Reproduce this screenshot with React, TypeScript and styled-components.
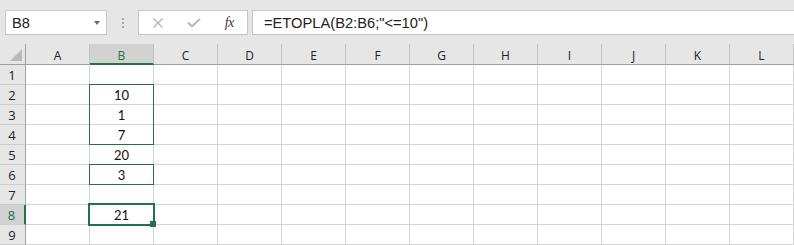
import React from 'react';
import styled, { createGlobalStyle, css } from 'styled-components';

const GREEN = '#217346';
const COLS = ['A', 'B', 'C', 'D', 'E', 'F', 'G', 'H', 'I', 'J', 'K', 'L'];
const ROWS = [1, 2, 3, 4, 5, 6, 7, 8, 9];
const ACTIVE_COL = 'B';
const ACTIVE_ROW = 8;

const values: Record<string, string> = {
  B2: '10',
  B3: '1',
  B4: '7',
  B5: '20',
  B6: '3',
  B8: '21',
};

const GlobalStyle = createGlobalStyle`
  html, body {
    margin: 0;
    padding: 0;
    background: #e6e6e6;
    overflow: hidden;
  }
  * { box-sizing: border-box; }
`;

const Page = styled.div`
  width: 794px;
  height: 245px;
  display: flex;
  flex-direction: column;
  background: #e6e6e6;
  font-family: 'Liberation Sans', Arial, sans-serif;
`;

/* formula bar */
const Toolbar = styled.div`
  height: 44px;
  display: flex;
  align-items: flex-start;
  padding: 10px 0 0 5px;
`;

const NameBox = styled.div`
  position: relative;
  width: 102px;
  height: 25px;
  background: #fff;
  border: 1px solid #c6c6c6;
  display: flex;
  align-items: center;
  padding-left: 6px;
  font-size: 14.5px;
  color: #222;
`;

const DropArrow = styled.span`
  margin-left: auto;
  margin-right: 6px;
  width: 0;
  height: 0;
  border-left: 3.5px solid transparent;
  border-right: 3.5px solid transparent;
  border-top: 4px solid #6d6d6d;
`;

const Grip = styled.div`
  width: 31px;
  height: 25px;
  display: flex;
  flex-direction: column;
  align-items: center;
  justify-content: center;
  gap: 2px;
`;

const GripDot = styled.span`
  width: 2px;
  height: 2px;
  background: #a8a8a8;
`;

const FormulaButtons = styled.div`
  width: 110px;
  height: 25px;
  background: #fff;
  border: 1px solid #c6c6c6;
  display: flex;
  padding-left: 1px;
`;

const IconSlot = styled.div`
  width: 36px;
  height: 100%;
  display: flex;
  align-items: center;
  justify-content: center;
`;

const FxLabel = styled.span`
  font-family: 'Liberation Serif', 'Times New Roman', serif;
  font-style: italic;
  font-size: 14px;
  color: #3c3c3c;
  letter-spacing: -0.5px;
`;

const FormulaInput = styled.div`
  flex: 1;
  height: 25px;
  margin-left: 4px;
  margin-right: -1px;
  background: #fff;
  border: 1px solid #c6c6c6;
  display: flex;
  align-items: center;
  padding-left: 11px;
  font-size: 14.7px;
  color: #222;
  white-space: nowrap;
`;

/* sheet */
const Sheet = styled.div`
  position: relative;
  display: grid;
  grid-template-columns: 26px repeat(12, 64px);
  grid-template-rows: 21px repeat(9, 20px);
  background: #fff;
`;

const Corner = styled.div`
  position: relative;
  background: #e6e6e6;
  border-right: 1px solid #a0a0a0;
  border-bottom: 1px solid #a0a0a0;
  &::after {
    content: '';
    position: absolute;
    left: 10px;
    top: 5px;
    width: 12px;
    height: 12px;
    background: #b9b9b9;
    clip-path: polygon(100% 0, 100% 100%, 0 100%);
  }
`;

const ColHeader = styled.div<{ $active?: boolean }>`
  background: ${({ $active }) => ($active ? '#d2d2d2' : '#e6e6e6')};
  border-right: 1px solid #c3c3c3;
  border-bottom: ${({ $active }) => ($active ? `2px solid ${GREEN}` : '1px solid #a0a0a0')};
  display: flex;
  align-items: center;
  justify-content: center;
  padding-top: ${({ $active }) => ($active ? '3px' : '2px')};
  font-family: 'Open Sans', sans-serif;
  font-size: 12px;
  color: ${({ $active }) => ($active ? GREEN : '#222')};
`;

const RowHeader = styled.div<{ $active?: boolean }>`
  background: ${({ $active }) => ($active ? '#d2d2d2' : '#e6e6e6')};
  border-bottom: 1px solid #cdcdcd;
  ${({ $active }) =>
    $active
      ? css`
          border-right: 2px solid ${GREEN};
          color: ${GREEN};
        `
      : css`
          border-right: 1px solid #a0a0a0;
          color: #222;
        `}
  display: flex;
  align-items: center;
  justify-content: center;
  padding-top: 1px;
  padding-right: 1px;
  font-family: 'Open Sans', sans-serif;
  font-size: 13px;
`;

const Cell = styled.div`
  border-right: 1px solid #d4d4d4;
  border-bottom: 1px solid #d4d4d4;
  display: flex;
  align-items: center;
  justify-content: center;
  padding-top: 1px;
  font-family: Lato, 'Open Sans', sans-serif;
  font-size: 13px;
  color: #111;
`;

const RangeBox = styled.div<{ $thick?: boolean }>`
  position: absolute;
  pointer-events: none;
  border: ${({ $thick }) => ($thick ? 2 : 1)}px solid ${GREEN};
`;

const FillHandle = styled.div`
  position: absolute;
  width: 6px;
  height: 6px;
  background: ${GREEN};
`;

const colLeft = (col: string) => 25 + 64 * COLS.indexOf(col);
const rowTop = (row: number) => 20 * row;

function Range({ col, from, to, thick }: { col: string; from: number; to: number; thick?: boolean }) {
  const pad = thick ? 1 : 0;
  const left = colLeft(col) - pad;
  const top = rowTop(from) - pad;
  return (
    <RangeBox
      $thick={thick}
      style={{
        left,
        top,
        width: 65 + pad * 2,
        height: (to - from + 1) * 20 + 1 + pad * 2,
      }}
    />
  );
}

const CrossIcon = () => (
  <svg width="12" height="10" viewBox="0 0 12 10">
    <path d="M1.5 0.5 L10.5 9.5 M10.5 0.5 L1.5 9.5" stroke="#b3b3b3" strokeWidth="1.3" fill="none" />
  </svg>
);

const CheckIcon = () => (
  <svg width="14" height="10" viewBox="0 0 14 10">
    <path d="M1 4.5 L5 8.5 L13 0.8" stroke="#b3b3b3" strokeWidth="1.8" fill="none" />
  </svg>
);

export default function App() {
  const handleLeft = colLeft(ACTIVE_COL) + 61;
  const handleTop = rowTop(ACTIVE_ROW) + 17;

  return (
    <>
      <GlobalStyle />
      <Page>
        <Toolbar>
          <NameBox>
            B8
            <DropArrow />
          </NameBox>
          <Grip>
            <GripDot />
            <GripDot />
            <GripDot />
          </Grip>
          <FormulaButtons>
            <IconSlot>
              <CrossIcon />
            </IconSlot>
            <IconSlot>
              <CheckIcon />
            </IconSlot>
            <IconSlot>
              <FxLabel>fx</FxLabel>
            </IconSlot>
          </FormulaButtons>
          <FormulaInput>=ETOPLA(B2:B6;"&lt;=10")</FormulaInput>
        </Toolbar>

        <Sheet>
          <Corner />
          {COLS.map((c) => (
            <ColHeader key={c} $active={c === ACTIVE_COL}>
              {c}
            </ColHeader>
          ))}
          {ROWS.map((r) => (
            <React.Fragment key={r}>
              <RowHeader $active={r === ACTIVE_ROW}>{r}</RowHeader>
              {COLS.map((c) => (
                <Cell key={c + r}>{values[c + r] ?? ''}</Cell>
              ))}
            </React.Fragment>
          ))}

          <Range col="B" from={2} to={4} />
          <Range col="B" from={6} to={6} />
          <Range col="B" from={8} to={8} thick />
          <FillHandle style={{ left: handleLeft, top: handleTop }} />
        </Sheet>
      </Page>
    </>
  );
}
